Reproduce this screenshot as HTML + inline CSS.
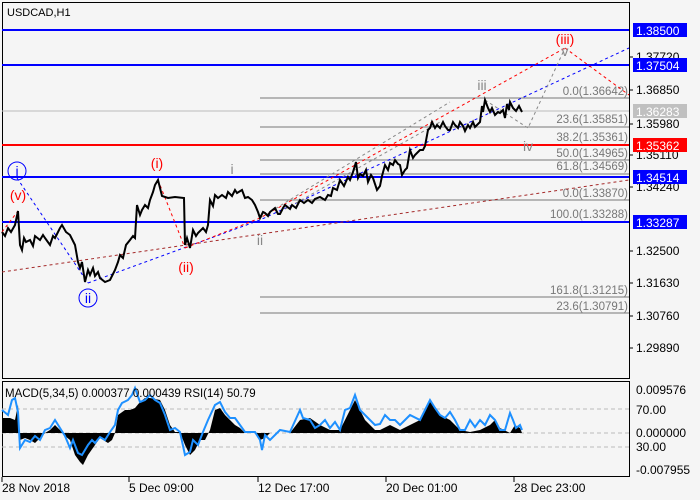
<!DOCTYPE html>
<html><head><meta charset="utf-8"><style>
html,body{margin:0;padding:0;background:#f5f5f5;}
svg{display:block;font-family:"Liberation Sans",sans-serif;}
</style></head><body>
<svg width="700" height="500" viewBox="0 0 700 500" xmlns="http://www.w3.org/2000/svg">
<rect width="700" height="500" fill="#f5f5f5"/>
<rect x="2.5" y="2.5" width="627" height="376" fill="none" stroke="#000"/>
<rect x="2.5" y="381.5" width="627" height="95" fill="none" stroke="#000"/>
<text x="7" y="16" font-size="11" fill="#000">USDCAD,H1</text>

<g stroke="#777" stroke-width="1">
<line x1="260" y1="98" x2="629" y2="98"/>
<line x1="260" y1="127" x2="629" y2="127"/>
<line x1="260" y1="160" x2="629" y2="160"/>
<line x1="260" y1="174" x2="629" y2="174"/>
<line x1="260" y1="200" x2="629" y2="200"/>
<line x1="260" y1="297" x2="629" y2="297"/>
<line x1="260" y1="313" x2="629" y2="313"/>
</g>
<line x1="2" y1="111" x2="629" y2="111" stroke="#bbb"/>
<g font-size="11.5" fill="#777" text-anchor="end">
<text x="628" y="95">0.0(1.36642)</text>
<text x="628" y="123">23.6(1.35851)</text>
<text x="628" y="141">38.2(1.35361)</text>
<text x="628" y="157">50.0(1.34965)</text>
<text x="628" y="170">61.8(1.34569)</text>
<text x="628" y="197">0.0(1.33870)</text>
<text x="628" y="218">100.0(1.33288)</text>
<text x="628" y="294">161.8(1.31215)</text>
<text x="628" y="310">23.6(1.30791)</text>
</g>
<line x1="2" y1="30" x2="629" y2="30" stroke="#0000ff" stroke-width="2"/>
<line x1="2" y1="65" x2="629" y2="65" stroke="#0000ff" stroke-width="2"/>
<line x1="2" y1="145" x2="629" y2="145" stroke="#ff0000" stroke-width="2"/>
<line x1="2" y1="177" x2="629" y2="177" stroke="#0000ff" stroke-width="2"/>
<line x1="2" y1="222" x2="629" y2="222" stroke="#0000ff" stroke-width="2"/>

<g fill="none" stroke-width="1">
<polyline points="2,272 629,180" stroke="#a52a2a" stroke-dasharray="3,3"/>
<polyline points="88,283 260,220 629,48" stroke="#0000ff" stroke-dasharray="3,3"/>
<polyline points="17,178 88,283" stroke="#0000ff" stroke-dasharray="3,3"/>
<polyline points="158,180 185,248" stroke="#ff0000" stroke-dasharray="3,3"/>
<polyline points="2,232 18,211" stroke="#ff0000" stroke-dasharray="3,3"/>
<polyline points="185,248 260,218 565,48" stroke="#ff0000" stroke-dasharray="3,3"/>
<polyline points="565,48 629,95" stroke="#ff0000" stroke-dasharray="3,3"/>
<polyline points="260,218 450,102" stroke="#888" stroke-dasharray="3,3"/>
<polyline points="280,212 440,122" stroke="#888" stroke-dasharray="3,3"/>
<polyline points="485,100 528,128 565,48" stroke="#888" stroke-dasharray="3,3"/>
</g>

<polyline fill="none" stroke="#000" stroke-width="2" points="2,232 5,236 8,228 11,232 15,225 18,211 20,245 22,250 24,238 26,242 30,240 33,246 35,236 40,240 43,235 45,238 50,245 53,236 55,238 60,228 62,225 66,232 70,235 75,245 78,262 80,268 82,262 85,282 88,270 90,275 93,268 95,276 98,272 100,278 105,282 110,280 113,274 115,270 118,262 120,255 123,258 126,245 130,240 133,236 135,238 137,205 140,215 142,210 145,205 148,208 150,200 153,192 155,185 158,180 160,188 162,196 168,198 175,197 184,198 185,245 187,238 190,248 193,230 196,236 198,233 203,228 206,232 208,225 210,200 213,206 215,195 218,198 222,195 226,198 228,192 232,196 235,190 237,193 242,190 245,198 248,197 252,200 255,205 258,212 260,218 263,212 265,213 268,216 270,212 275,208 278,214 280,214 283,208 285,205 290,209 292,205 296,208 300,200 304,203 308,200 312,203 315,199 320,197 325,200 328,195 331,196 333,188 337,190 340,180 344,186 348,177 350,180 353,172 356,162 358,178 360,174 363,176 366,170 368,182 371,175 373,178 375,184 377,190 380,186 382,176 385,165 388,170 390,163 393,165 395,160 398,164 400,165 402,175 405,170 407,168 410,150 413,158 415,155 418,152 420,150 423,150 425,146 428,130 430,128 432,122 435,128 437,125 440,128 443,122 445,126 448,130 450,130 453,122 455,125 458,128 460,122 463,126 465,131 468,125 470,128 473,122 475,127 478,124 480,122 482,106 483,112 485,100 488,108 490,112 492,108 495,115 498,112 500,113 503,110 505,118 507,104 509,110 510,102 513,108 516,111 519,106 522,112"/>

<g font-size="14" text-anchor="middle">
<text x="565" y="44" fill="#ff0000">(iii)</text>
<text x="565" y="56" fill="#888">v</text>
<text x="482" y="90" fill="#888">iii</text>
<text x="528" y="151" fill="#888">iv</text>
<text x="18" y="200" fill="#ff0000">(v)</text>
<text x="157" y="168" fill="#ff0000">(i)</text>
<text x="232" y="174" fill="#888">i</text>
<text x="186" y="272" fill="#ff0000">(ii)</text>
<text x="260" y="245" fill="#888">ii</text>
<circle cx="17" cy="171" r="9" fill="none" stroke="#0000ff"/>
<text x="17" y="176" fill="#0000ff">i</text>
<circle cx="88" cy="298" r="9" fill="none" stroke="#0000ff"/>
<text x="88" y="303" fill="#0000ff">ii</text>
</g>

<g font-size="12" fill="#000">
<g stroke="#000"><line x1="629" y1="57" x2="633" y2="57"/><line x1="629" y1="90" x2="633" y2="90"/><line x1="629" y1="124" x2="633" y2="124"/><line x1="629" y1="155" x2="633" y2="155"/><line x1="629" y1="187" x2="633" y2="187"/><line x1="629" y1="251" x2="633" y2="251"/><line x1="629" y1="283" x2="633" y2="283"/><line x1="629" y1="316" x2="633" y2="316"/><line x1="629" y1="348" x2="633" y2="348"/></g>
<text x="636" y="61">1.37720</text>
<text x="636" y="94">1.36850</text>
<text x="636" y="128">1.35980</text>
<text x="636" y="159">1.35110</text>
<text x="636" y="191">1.34240</text>
<text x="636" y="255">1.32500</text>
<text x="636" y="287">1.31630</text>
<text x="636" y="320">1.30760</text>
<text x="636" y="352">1.29890</text>
</g>
<g font-size="12" fill="#fff">
<rect x="633" y="23" width="54" height="14" fill="#0000ff"/><text x="636" y="35">1.38500</text>
<rect x="633" y="58" width="54" height="14" fill="#0000ff"/><text x="636" y="70">1.37504</text>
<rect x="633" y="104" width="54" height="14" fill="#c0c0c0"/><text x="636" y="116">1.36283</text>
<rect x="633" y="138" width="54" height="14" fill="#ff0000"/><text x="636" y="150">1.35362</text>
<rect x="633" y="170" width="54" height="14" fill="#0000ff"/><text x="636" y="182">1.34514</text>
<rect x="633" y="215" width="54" height="14" fill="#0000ff"/><text x="636" y="227">1.33287</text>
</g>

<g stroke="#bbb" stroke-dasharray="4,3"><line x1="2" y1="409" x2="629" y2="409"/><line x1="2" y1="433" x2="629" y2="433"/><line x1="2" y1="447" x2="629" y2="447"/></g>
<polygon fill="#000" points="2,433 2,418 10,418 15,420 18,405 20,440 25,438 30,440 35,443 40,438 45,433 50,430 55,425 60,430 65,436 70,440 75,455 80,462 83,465 88,455 95,445 100,438 108,443 112,440 115,433 118,415 125,410 130,410 135,408 140,402 145,398 150,398 160,400 165,410 170,425 175,432 180,432 185,445 190,455 195,450 200,440 205,440 210,430 215,410 220,408 225,415 230,420 235,425 240,428 245,433 255,433 260,440 265,438 270,433 290,433 300,420 310,418 320,425 330,430 340,430 355,400 365,420 375,430 380,430 390,425 400,430 410,425 420,420 430,400 440,415 450,420 460,430 470,432 480,430 490,425 495,420 500,428 510,433 515,425 520,428 522,433"/>
<polyline fill="none" stroke="#1e90ff" stroke-width="2" points="2,410 8,415 12,400 15,398 18,412 20,448 25,440 30,442 35,436 40,440 45,430 50,428 55,420 60,428 65,436 70,448 73,440 78,453 82,455 88,445 92,440 95,443 100,437 105,440 110,432 115,425 118,410 122,403 128,400 132,395 135,388 140,402 145,400 150,395 155,400 160,403 165,415 170,430 175,428 180,432 185,455 190,452 193,440 198,445 203,432 208,420 215,405 220,402 225,412 230,418 235,418 240,425 245,432 255,432 260,440 262,450 265,435 270,440 280,430 290,432 300,410 303,418 310,420 315,428 320,425 325,420 330,428 335,422 340,430 345,410 350,408 355,395 360,410 365,415 370,420 375,425 380,424 385,415 390,420 395,420 400,425 405,420 410,415 420,420 425,410 430,400 435,408 440,415 445,418 450,412 455,420 460,430 465,430 470,420 475,427 480,420 485,425 490,415 495,420 500,430 505,430 510,413 513,420 516,428 520,425 522,430"/>
<text x="5" y="397" font-size="11.5" fill="#000">MACD(5,34,5) 0.000377 0.000439 RSI(14) 50.79</text>
<g font-size="12" fill="#000">
<text x="636" y="394">0.009576</text>
<text x="636" y="414">70.00</text>
<text x="636" y="437">0.000000</text>
<text x="636" y="451">30.00</text>
<text x="636" y="474">-0.007955</text>
</g>
<g stroke="#000"><line x1="2" y1="477" x2="2" y2="482"/><line x1="129" y1="477" x2="129" y2="482"/><line x1="258" y1="477" x2="258" y2="482"/><line x1="386" y1="477" x2="386" y2="482"/><line x1="514" y1="477" x2="514" y2="482"/></g>
<g font-size="12" fill="#000">
<text x="2" y="492">28 Nov 2018</text>
<text x="129" y="492">5 Dec 09:00</text>
<text x="258" y="492">12 Dec 17:00</text>
<text x="386" y="492">20 Dec 01:00</text>
<text x="514" y="492">28 Dec 23:00</text>
</g>
</svg>
</body></html>
